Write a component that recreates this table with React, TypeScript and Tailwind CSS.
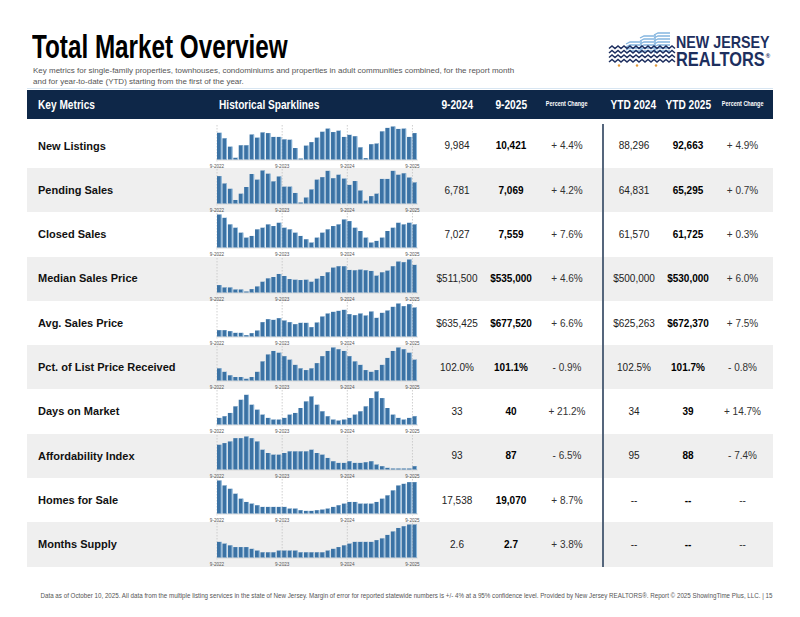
import React from "react";

const COLS = "grid grid-cols-[178px_229px_46px_62px_60px_62px_48px_61px]";

type Row = {
  label: string;
  data: number[];
  a: string;
  b: string;
  c: string;
  d: string;
  e: string;
  f: string;
};

const rows: Row[] = [
  {
    label: "New Listings",
    data: [77, 61, 37, 5, 41, 41, 72, 63, 78, 76, 65, 65, 58, 57, 33, 2, 40, 50, 63, 80, 89, 79, 83, 65, 71, 67, 35, 4, 44, 46, 81, 91, 95, 88, 89, 65, 76],
    a: "9,984", b: "10,421", c: "+ 4.4%", d: "88,296", e: "92,663", f: "+ 4.9%",
  },
  {
    label: "Pending Sales",
    data: [78, 57, 42, 10, 28, 47, 84, 68, 94, 85, 63, 77, 48, 48, 30, 2, 17, 40, 68, 75, 93, 72, 82, 71, 53, 64, 37, 8, 21, 28, 70, 70, 93, 82, 86, 74, 60],
    a: "6,781", b: "7,069", c: "+ 4.2%", d: "64,831", e: "65,295", f: "+ 0.7%",
  },
  {
    label: "Closed Sales",
    data: [1, 0.9, 0.7, 0.6, 0.45, 0.3, 0.35, 0.55, 0.6, 0.7, 0.65, 0.75, 0.6, 0.55, 0.45, 0.35, 0.25, 0.15, 0.3, 0.45, 0.55, 0.65, 0.7, 0.85, 0.8, 0.6, 0.5, 0.3, 0.15, 0.2, 0.3, 0.5, 0.6, 0.75, 0.7, 0.75, 0.7],
    a: "7,027", b: "7,559", c: "+ 7.6%", d: "61,570", e: "61,725", f: "+ 0.3%",
  },
  {
    label: "Median Sales Price",
    data: [22, 15, 15, 9, 9, 3, 10, 18, 32, 42, 46, 55, 49, 40, 38, 37, 38, 32, 41, 49, 60, 74, 78, 78, 67, 66, 68, 66, 64, 50, 60, 65, 78, 92, 90, 98, 82],
    a: "$511,500", b: "$535,000", c: "+ 4.6%", d: "$500,000", e: "$530,000", f: "+ 6.0%",
  },
  {
    label: "Avg. Sales Price",
    data: [19, 19, 16, 11, 11, 4, 10, 18, 43, 52, 50, 55, 48, 43, 37, 41, 41, 28, 42, 60, 69, 74, 77, 80, 67, 64, 69, 63, 75, 56, 71, 78, 89, 99, 91, 97, 87],
    a: "$635,425", b: "$677,520", c: "+ 6.6%", d: "$625,263", e: "$672,370", f: "+ 7.5%",
  },
  {
    label: "Pct. of List Price Received",
    data: [0.35, 0.25, 0.15, 0.1, 0.1, 0.05, 0.1, 0.25, 0.55, 0.75, 0.85, 0.8, 0.7, 0.6, 0.45, 0.35, 0.3, 0.35, 0.5, 0.7, 0.85, 0.95, 0.9, 0.85, 0.7, 0.55, 0.45, 0.3, 0.25, 0.3, 0.45, 0.65, 0.85, 0.95, 0.9, 0.8, 0.6],
    a: "102.0%", b: "101.1%", c: "- 0.9%", d: "102.5%", e: "101.7%", f: "- 0.8%",
  },
  {
    label: "Days on Market",
    data: [0.2, 0.25, 0.35, 0.55, 0.75, 0.9, 0.6, 0.45, 0.3, 0.2, 0.15, 0.15, 0.2, 0.3, 0.35, 0.5, 0.7, 0.85, 0.6, 0.4, 0.25, 0.15, 0.12, 0.15, 0.2, 0.3, 0.4, 0.55, 0.8, 1, 0.8, 0.5, 0.3, 0.2, 0.15, 0.2, 0.25],
    a: "33", b: "40", c: "+ 21.2%", d: "34", e: "39", f: "+ 14.7%",
  },
  {
    label: "Affordability Index",
    data: [0.75, 0.8, 0.85, 0.95, 0.95, 1, 0.95, 0.85, 0.6, 0.5, 0.45, 0.45, 0.5, 0.55, 0.55, 0.55, 0.55, 0.6, 0.5, 0.45, 0.35, 0.25, 0.2, 0.2, 0.25, 0.2, 0.2, 0.22, 0.25, 0.15, 0.1, 0.05, 0.02, 0.01, 0.01, 0.02, 0.1],
    a: "93", b: "87", c: "- 6.5%", d: "95", e: "88", f: "- 7.4%",
  },
  {
    label: "Homes for Sale",
    data: [1, 0.85, 0.75, 0.6, 0.45, 0.35, 0.3, 0.25, 0.2, 0.2, 0.2, 0.2, 0.2, 0.15, 0.15, 0.1, 0.08, 0.08, 0.1, 0.12, 0.15, 0.2, 0.25, 0.3, 0.35, 0.35, 0.3, 0.3, 0.3, 0.35, 0.45, 0.55, 0.7, 0.85, 0.9, 0.95, 0.95],
    a: "17,538", b: "19,070", c: "+ 8.7%", d: "--", e: "--", f: "--",
  },
  {
    label: "Months Supply",
    data: [0.45, 0.4, 0.35, 0.3, 0.3, 0.3, 0.25, 0.2, 0.15, 0.15, 0.15, 0.2, 0.2, 0.2, 0.2, 0.15, 0.15, 0.15, 0.15, 0.15, 0.2, 0.25, 0.3, 0.35, 0.4, 0.45, 0.45, 0.45, 0.45, 0.5, 0.55, 0.65, 0.75, 0.85, 0.9, 0.95, 0.95],
    a: "2.6", b: "2.7", c: "+ 3.8%", d: "--", e: "--", f: "--",
  },
];

function Sparkline({ data }: { data: number[] }) {
  const x0 = 9;
  const pitch = 5.43;
  const base = 35.5;
  const maxH = 33;
  const max = Math.max(...data);
  const years = ["9-2022", "9-2023", "9-2024", "9-2025"];
  return (
    <svg width={215} height={44} className="block overflow-visible">
      {years.map((y, k) => (
        <line
          key={y}
          x1={x0 + k * 12 * pitch}
          x2={x0 + k * 12 * pitch}
          y1={1}
          y2={base + 2}
          stroke="#c4c4c4"
          strokeWidth={0.8}
          strokeDasharray="1.5 1.5"
        />
      ))}
      <line x1={x0 - 1} x2={x0 + 37 * pitch} y1={base + 0.5} y2={base + 0.5} stroke="#d2d2d2" strokeWidth={0.8} />
      {data.map((v, i) => {
        const h = Math.max(1, (v / max) * maxH);
        const x = x0 + i * pitch;
        return (
          <g key={i}>
            <rect x={x} y={base - h} width={pitch - 0.9} height={h} fill="#3b72a4" />
            <rect x={x + pitch - 1.7} y={base - h} width={0.8} height={h} fill="#9ec7e8" />
          </g>
        );
      })}
      {years.map((y, k) => (
        <text
          key={y}
          x={x0 + k * 12 * pitch}
          y={43.5}
          fontSize={4.6}
          textAnchor="middle"
          fill="#555"
          fontFamily="Liberation Sans, sans-serif"
        >
          {y}
        </text>
      ))}
    </svg>
  );
}

function Logo() {
  const waves = [17.5, 22, 26.5, 31];
  const zig = (y: number) => {
    let d = `M3 ${y}`;
    for (let x = 3; x < 64; x += 6) {
      d += ` L${x + 3} ${y - 2.6} L${x + 6} ${y}`;
    }
    return d;
  };
  const stripes: { x1: number; x2: number; y: number }[] = [];
  for (let y = 11; y <= 20; y += 3) stripes.push({ x1: 20, x2: 36, y });
  for (let y = 5; y <= 20; y += 3) stripes.push({ x1: 34, x2: 50, y });
  for (let y = 2; y <= 20; y += 3) stripes.push({ x1: 48, x2: 64, y });
  return (
    <div className="flex items-center">
      <svg width={70} height={38} viewBox="0 0 70 38">
        {stripes.map((s, i) => (
          <path
            key={i}
            d={`M${s.x1} ${s.y + 2} L${s.x1 + 4} ${s.y} L${s.x2} ${s.y}`}
            stroke="#84b5df"
            strokeWidth={1.3}
            fill="none"
          />
        ))}
        {waves.map((y) => (
          <path key={y} d={zig(y)} stroke="#1e2f5f" strokeWidth={1.5} fill="none" strokeLinejoin="miter" />
        ))}
        <circle cx={13} cy={34.5} r={1.2} fill="#e39a3b" />
        <circle cx={31} cy={34.5} r={1.2} fill="#e39a3b" />
        <circle cx={50} cy={34.5} r={1.2} fill="#e39a3b" />
      </svg>
      <div className="w-[97px] pt-[1px] font-bold text-[#1d2f5e]">
        <div className="text-[17px] leading-[13px] whitespace-nowrap">
          <span className="inline-block origin-left scale-x-[0.84]">NEW JERSEY</span>
        </div>
        <div className="flex items-start mt-[2px] text-[20.5px] leading-[15px] whitespace-nowrap">
          <span className="inline-block origin-left scale-x-[0.8]">REALTORS</span>
          <span className="-ml-[21px] mt-[2px] text-[6px] leading-[6px]">®</span>
        </div>
      </div>
    </div>
  );
}

function Cond({ children, left }: { children: React.ReactNode; left?: boolean }) {
  return (
    <span className={`inline-block whitespace-nowrap scale-x-[0.78] ${left ? "origin-left" : "origin-center"}`}>
      {children}
    </span>
  );
}

export default function App() {
  return (
    <div className="w-[800px] h-[617px] bg-white overflow-hidden font-['Liberation_Sans',Arial,sans-serif] text-black">
      <div className="px-[27px]">
        <div className="flex justify-between items-start pt-[30px] h-[63px]">
          <h1 className="pl-[5px] text-[33px] leading-[33px] font-bold text-black whitespace-nowrap">
            <span className="inline-block origin-left scale-x-[0.735]">Total Market Overview</span>
          </h1>
          <div className="mt-[1px]">
            <Logo />
          </div>
        </div>
        <p className="pl-[6px] mt-[1.5px] text-[8px] leading-[11px] text-[#555] whitespace-nowrap">
          Key metrics for single-family properties, townhouses, condominiums and properties in adult communities combined, for the report month
          <br />
          and for year-to-date (YTD) starting from the first of the year.
        </p>
        <div className="mt-[1.5px] h-px bg-[#d8e6f2]" />

        <div className={`${COLS} mt-[1px] h-[29px] bg-[#0e2748] text-white font-bold items-center`}>
          <div className="pl-[11px] text-[13px]"><Cond left>Key Metrics</Cond></div>
          <div className="pl-[14px] text-[13px]"><Cond left>Historical Sparklines</Cond></div>
          <div className="flex justify-center text-[13px]"><Cond>9-2024</Cond></div>
          <div className="flex justify-center text-[13px]"><Cond>9-2025</Cond></div>
          <div className="flex justify-center pr-[10px] text-[7px]"><Cond>Percent Change</Cond></div>
          <div className="flex justify-center text-[13px]"><Cond>YTD 2024</Cond></div>
          <div className="flex justify-center text-[13px]"><Cond>YTD 2025</Cond></div>
          <div className="flex justify-center text-[7px]"><Cond>Percent Change</Cond></div>
        </div>

        <div className="pt-[4.7px]">
          {rows.map((r, i) => (
            <div
              key={r.label}
              className={`${COLS} h-[44.3px] items-center text-[10px] ${i % 2 === 1 ? "bg-[#efefef]" : "bg-white"}`}
            >
              <div className="pl-[11px] text-[11px] font-bold text-[#111] whitespace-nowrap">{r.label}</div>
              <div className="pl-[3px] self-start">
                <Sparkline data={r.data} />
              </div>
              <div className="flex justify-center text-[#222] whitespace-nowrap">{r.a}</div>
              <div className="flex justify-center font-bold whitespace-nowrap">{r.b}</div>
              <div className="flex justify-center pr-[10px] text-[#333] whitespace-nowrap">{r.c}</div>
              <div className="h-full flex items-center justify-center border-l-2 border-[#55667c] text-[#222] whitespace-nowrap">{r.d}</div>
              <div className="flex justify-center font-bold whitespace-nowrap">{r.e}</div>
              <div className="flex justify-center text-[#333] whitespace-nowrap">{r.f}</div>
            </div>
          ))}
        </div>

        <div className="mt-[24px] flex justify-end text-[7px] text-[#555] whitespace-nowrap">
          <span className="inline-block origin-right scale-x-[0.89]">
            Data as of October 10, 2025. All data from the multiple listing services in the state of New Jersey. Margin of error for reported statewide numbers is +/- 4% at a 95% confidence level. Provided by New Jersey REALTORS®. Report © 2025 ShowingTime Plus, LLC. | 15
          </span>
        </div>
      </div>
    </div>
  );
}
